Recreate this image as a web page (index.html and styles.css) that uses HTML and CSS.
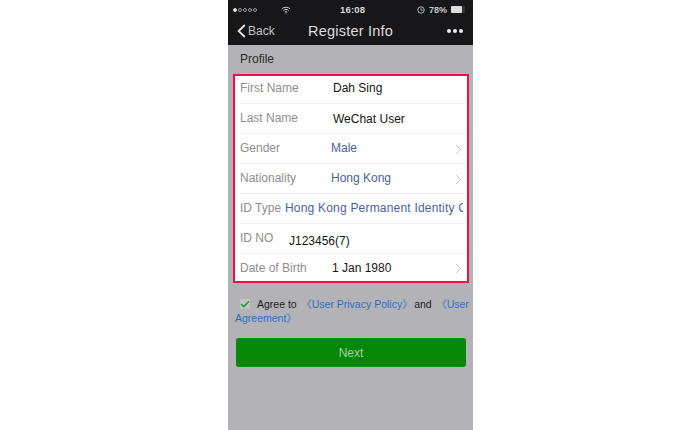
FILE: index.html
```html
<!DOCTYPE html>
<html lang="en">
<head>
  <meta charset="UTF-8" />
  <title>Register Info</title>
  <link rel="stylesheet" href="styles.css">
</head>
<body>
  <div class="phone">
    <div class="header">
      <div class="status">
        <div class="signal"><i class="on"></i><i></i><i></i><i></i><i></i></div>
        <svg class="wifi" width="10" height="8" viewBox="0 0 12 9"><path d="M1 3.2C4 .6 8 .6 11 3.2M2.8 5C4.8 3.4 7.2 3.4 9.2 5M4.5 6.7C5.4 6 6.6 6 7.5 6.7" fill="none" stroke="#ddd" stroke-width="1.1"/><circle cx="6" cy="8" r=".8" fill="#ddd"/></svg>
        <span class="time">16:08</span>
        <div class="battery-wrap">
          <svg width="8" height="8" viewBox="0 0 9 9"><circle cx="4.5" cy="4.5" r="3.6" fill="none" stroke="#ccc" stroke-width="1"/><path d="M4.5 2.6v2h1.8" fill="none" stroke="#ccc" stroke-width="1"/></svg>
          <span>78%</span>
          <div class="battery"><div class="level"></div></div>
        </div>
      </div>
      <div class="nav">
        <div class="back">
          <svg width="9" height="14" viewBox="0 0 9 14"><path d="M7.8 1L1.6 7l6.2 6" fill="none" stroke="#e6e6e6" stroke-width="1.8"/></svg>
          <span>Back</span>
        </div>
        <div class="title">Register Info</div>
        <div class="dots"><i></i><i></i><i></i></div>
      </div>
    </div>

    <div class="section-title">Profile</div>

    <div class="form-box">
      <div class="row">
        <span class="label">First Name</span>
        <span class="value">Dah Sing</span>
      </div>
      <div class="row">
        <span class="label">Last Name</span>
        <span class="value low">WeChat User</span>
      </div>
      <div class="row">
        <span class="label">Gender</span>
        <span class="value link">Male</span>
        <svg class="chev" width="7" height="11" viewBox="0 0 7 11"><path d="M1 1l4.5 4.5L1 10" fill="none" stroke="#c4c4c4" stroke-width="1"/></svg>
      </div>
      <div class="row">
        <span class="label">Nationality</span>
        <span class="value link">Hong Kong</span>
        <svg class="chev" width="7" height="11" viewBox="0 0 7 11"><path d="M1 1l4.5 4.5L1 10" fill="none" stroke="#c4c4c4" stroke-width="1"/></svg>
      </div>
      <div class="row">
        <span class="label short">ID Type</span>
        <span class="value link clip">Hong Kong Permanent Identity Card</span>
      </div>
      <div class="row">
        <span class="label short">ID NO</span>
        <span class="value idno">J123456(7)</span>
      </div>
      <div class="row last">
        <span class="label">Date of Birth</span>
        <span class="value dob">1 Jan 1980</span>
        <svg class="chev" width="7" height="11" viewBox="0 0 7 11"><path d="M1 1l4.5 4.5L1 10" fill="none" stroke="#c4c4c4" stroke-width="1"/></svg>
      </div>
    </div>

    <div class="agree">
      <div class="agree-line">
        <span class="check">
          <svg width="10" height="8" viewBox="0 0 10 8"><path d="M1 4l2.8 2.6L9 1.2" fill="none" stroke="#1f9e2c" stroke-width="1.5"/></svg>
        </span>
        <span class="agree-text">Agree to</span>
        <a class="first">《User Privacy Policy》</a>
        <span class="and">and</span>
        <a class="second">《User</a>
      </div>
      <a class="wrapped">Agreement》</a>
    </div>

    <button class="next-btn">Next</button>
  </div>
</body>
</html>
```

FILE: styles.css
```css
* {
  box-sizing: border-box;
}
body {
  background-color: #fff;
  font-family: 'Liberation Sans', Arial, sans-serif;
  margin: 0;
  height: 430px;
  overflow: hidden;
}
.phone {
  width: 245px;
  height: 430px;
  margin-left: 228px;
  background-color: #b3b2b7;
  overflow: hidden;
}
.header {
  background-color: #17171a;
  height: 45px;
  color: #e6e6e6;
}
.status {
  height: 16px;
  padding: 3px 8px 0 5px;
  display: flex;
  align-items: center;
  font-size: 9px;
}
.signal {
  display: flex;
  gap: 1px;
}
.signal i {
  width: 4px;
  height: 4px;
  border-radius: 50%;
  border: 1px solid #999;
}
.signal i.on {
  background-color: #ddd;
  border-color: #ddd;
}
.wifi {
  margin-left: 24px;
}
.time {
  margin-left: 49px;
  font-size: 9.5px;
  font-weight: bold;
  letter-spacing: 0.2px;
  color: #d8d8d8;
}
.battery-wrap {
  margin-left: auto;
  display: flex;
  align-items: center;
  gap: 4px;
  font-weight: bold;
  color: #c8c8c8;
}
.battery {
  width: 14px;
  height: 7px;
  background-color: #333;
  border-radius: 1px;
}
.level {
  width: 78%;
  height: 100%;
  background-color: #ddd;
  border-radius: 1px;
}
.nav {
  height: 29px;
  display: flex;
  align-items: center;
  justify-content: space-between;
  padding: 0 10px 0 9px;
  position: relative;
}
.back {
  display: flex;
  align-items: center;
  gap: 2px;
  font-size: 12px;
  color: #c4c4c4;
}
.title {
  position: absolute;
  left: 0;
  right: 0;
  text-align: center;
  font-size: 14.5px;
  color: #dedede;
  letter-spacing: 0.2px;
}
.dots {
  display: flex;
  gap: 2px;
}
.dots i {
  width: 4px;
  height: 4px;
  border-radius: 50%;
  background-color: #eee;
}
.section-title {
  height: 29px;
  padding: 7px 0 0 12px;
  font-size: 12px;
  line-height: 15px;
  color: #2b2b2b;
}
.form-box {
  width: 236px;
  height: 209px;
  margin-left: 5px;
  border: 2px solid #ea1245;
  background-color: #fff;
  padding-left: 5px;
}
.row {
  height: 30px;
  display: flex;
  align-items: center;
  padding-bottom: 1px;
  font-size: 12px;
  border-bottom: 1px solid #f0f0f0;
  position: relative;
}
.row:first-child {
  height: 28px;
  padding-bottom: 3px;
}
.row.last {
  border-bottom: none;
  height: 28px;
  padding-bottom: 0;
}
.label {
  width: 93px;
  flex-shrink: 0;
  color: #8e8e8e;
}
.label.short {
  width: 45px;
  white-space: nowrap;
}
.value {
  color: #151515;
  white-space: nowrap;
}
.value.low {
  padding-top: 2px;
}
.value.link {
  color: #4a629e;
  margin-left: -2px;
}
.value.clip {
  width: 178px;
  overflow: hidden;
  margin-left: 0;
  letter-spacing: 0.2px;
}
.value.idno {
  padding-top: 5px;
  margin-left: 4px;
}
.value.dob {
  margin-left: -1px;
}
.chev {
  position: absolute;
  right: 5px;
  top: 10px;
}
.row.last .chev {
  top: 9px;
}
.agree {
  margin: 14px 0 0 7px;
  font-size: 10.5px;
  line-height: 14px;
  color: #1c1c1c;
}
.agree-line {
  display: flex;
  align-items: center;
  white-space: nowrap;
}
.check {
  display: flex;
  align-items: center;
  justify-content: center;
  width: 10px;
  height: 10px;
  margin-left: 5px;
  background-color: #c4c4c4;
  border-radius: 1px;
}
.agree-text {
  margin-left: 7px;
}
.agree a {
  color: #2a71c4;
}
.agree a.first {
  margin-left: 4px;
}
.and {
  margin-left: 1px;
}
.agree a.second {
  margin-left: 4px;
}
.wrapped {
  display: block;
}
.next-btn {
  display: block;
  width: 230px;
  height: 29px;
  margin: 13px 0 0 8px;
  background-color: #068706;
  color: #a9cfa4;
  border: none;
  border-radius: 3px;
  font-family: inherit;
  font-size: 12px;
}
```
